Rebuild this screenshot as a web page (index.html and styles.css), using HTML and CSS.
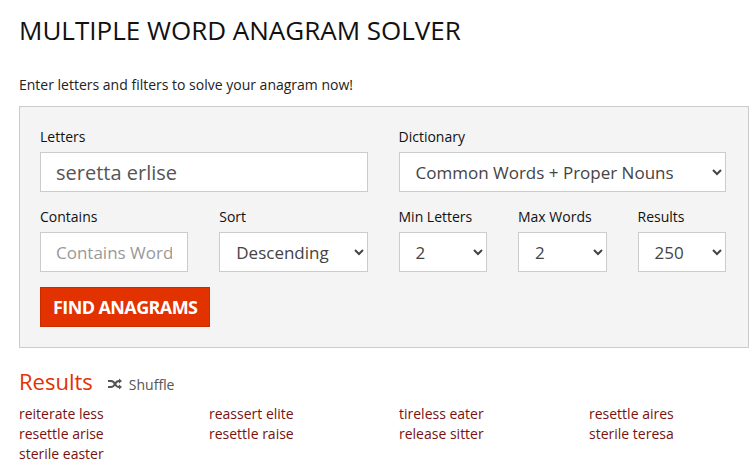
FILE: index.html
```html
<!DOCTYPE html>
<html lang="en">
<head>
<meta charset="utf-8">
<title>Multiple Word Anagram Solver</title>
<link rel="stylesheet" href="styles.css">
</head>
<body>
<main class="page">
  <h1 class="title">MULTIPLE WORD ANAGRAM SOLVER</h1>
  <p class="intro">Enter letters and filters to solve your anagram now!</p>
  <form class="panel">
    <div class="row">
      <div class="field half">
        <label class="label">Letters</label>
        <input class="control control-big" type="text" value="seretta erlise">
      </div>
      <div class="field half">
        <label class="label">Dictionary</label>
        <select class="control"><option>Common Words + Proper Nouns</option></select>
      </div>
    </div>
    <div class="row">
      <div class="half row-inner">
        <div class="field grow">
          <label class="label">Contains</label>
          <input class="control" type="text" placeholder="Contains Word">
        </div>
        <div class="field grow">
          <label class="label">Sort</label>
          <select class="control"><option>Descending</option></select>
        </div>
      </div>
      <div class="half row-inner">
        <div class="field grow">
          <label class="label">Min Letters</label>
          <select class="control"><option>2</option></select>
        </div>
        <div class="field grow">
          <label class="label">Max Words</label>
          <select class="control"><option>2</option></select>
        </div>
        <div class="field grow">
          <label class="label">Results</label>
          <select class="control"><option>250</option></select>
        </div>
      </div>
    </div>
    <button class="btn" type="button">FIND ANAGRAMS</button>
  </form>
  <div class="results-head">
    <h2 class="results-title">Results</h2>
    <a class="shuffle" href="#">
      <svg class="shuffle-icon" width="14" height="12" viewBox="0 0 14 12" aria-hidden="true">
        <path d="M0 3h3c2 0 3 1 4 3s2 3 4 3h1" fill="none" stroke="#555" stroke-width="1.8"/>
        <path d="M0 9h3c2 0 3-1 4-3s2-3 4-3h1" fill="none" stroke="#555" stroke-width="1.8"/>
        <path d="M11 0.5l3 2.5-3 2.5z M11 6.5l3 2.5-3 2.5z" fill="#555"/>
      </svg>
      Shuffle
    </a>
  </div>
  <ul class="words">
    <li>reiterate less</li>
    <li>reassert elite</li>
    <li>tireless eater</li>
    <li>resettle aires</li>
    <li>resettle arise</li>
    <li>resettle raise</li>
    <li>release sitter</li>
    <li>sterile teresa</li>
    <li>sterile easter</li>
  </ul>
</main>
</body>
</html>
```
FILE: styles.css
```css
* { box-sizing: border-box; }
body {
  margin: 0;
  background: #fff;
  font-family: "Open Sans", "Noto Sans", sans-serif;
  color: #222;
}
.page {
  padding: 0 4px 0 19px;
}
.title {
  margin: 0;
  padding-top: 13px;
  font-size: 26px;
  font-weight: 400;
  line-height: 34px;
  color: #111;
}
.intro {
  margin: 28px 0 0;
  font-size: 14px;
  line-height: 20px;
  color: #222;
}
.panel {
  margin-top: 11px;
  background: #f4f4f4;
  border: 1px solid #ccc;
  padding: 20px 22px 20px 20px;
}
.row {
  display: flex;
  gap: 31px;
  margin-bottom: 15px;
}
.half { flex: 1 1 0; min-width: 0; }
.row-inner { display: flex; gap: 31px; }
.grow { flex: 1 1 0; min-width: 0; }
.field { display: flex; flex-direction: column; }
.label {
  font-size: 14px;
  line-height: 20px;
  margin-bottom: 5px;
  color: #111;
}
.control {
  height: 40px;
  width: 100%;
  border: 1px solid #ccc;
  background: #fff;
  font-family: "Open Sans", "Noto Sans", sans-serif;
  font-size: 17px;
  color: #444;
  padding: 0 15px;
  border-radius: 0;
  outline: none;
}
.control::placeholder { color: #999; }
.control-big { font-size: 20px; color: #555; }
select.control { padding: 0 10px 0 12px; }
.btn {
  height: 40px;
  padding: 0 12px;
  background: #e23200;
  border: 1px solid #c82c00;
  color: #fff;
  font-family: "Open Sans", "Noto Sans", sans-serif;
  font-weight: 700;
  font-size: 18px;
  letter-spacing: -0.6px;
}
.results-head {
  display: flex;
  align-items: baseline;
  margin-top: 18px;
}
.results-title {
  margin: 0;
  font-size: 22px;
  font-weight: 400;
  line-height: 30px;
  color: #e23200;
}
.shuffle {
  margin-left: 15px;
  font-size: 14px;
  color: #555;
  text-decoration: none;
  display: inline-flex;
  align-items: center;
  gap: 7px;
}
.words {
  list-style: none;
  margin: 8px 0 0;
  padding: 0;
  display: grid;
  grid-template-columns: repeat(4, 190px);
  font-size: 14px;
  line-height: 20px;
  color: #7a1010;
}
```
